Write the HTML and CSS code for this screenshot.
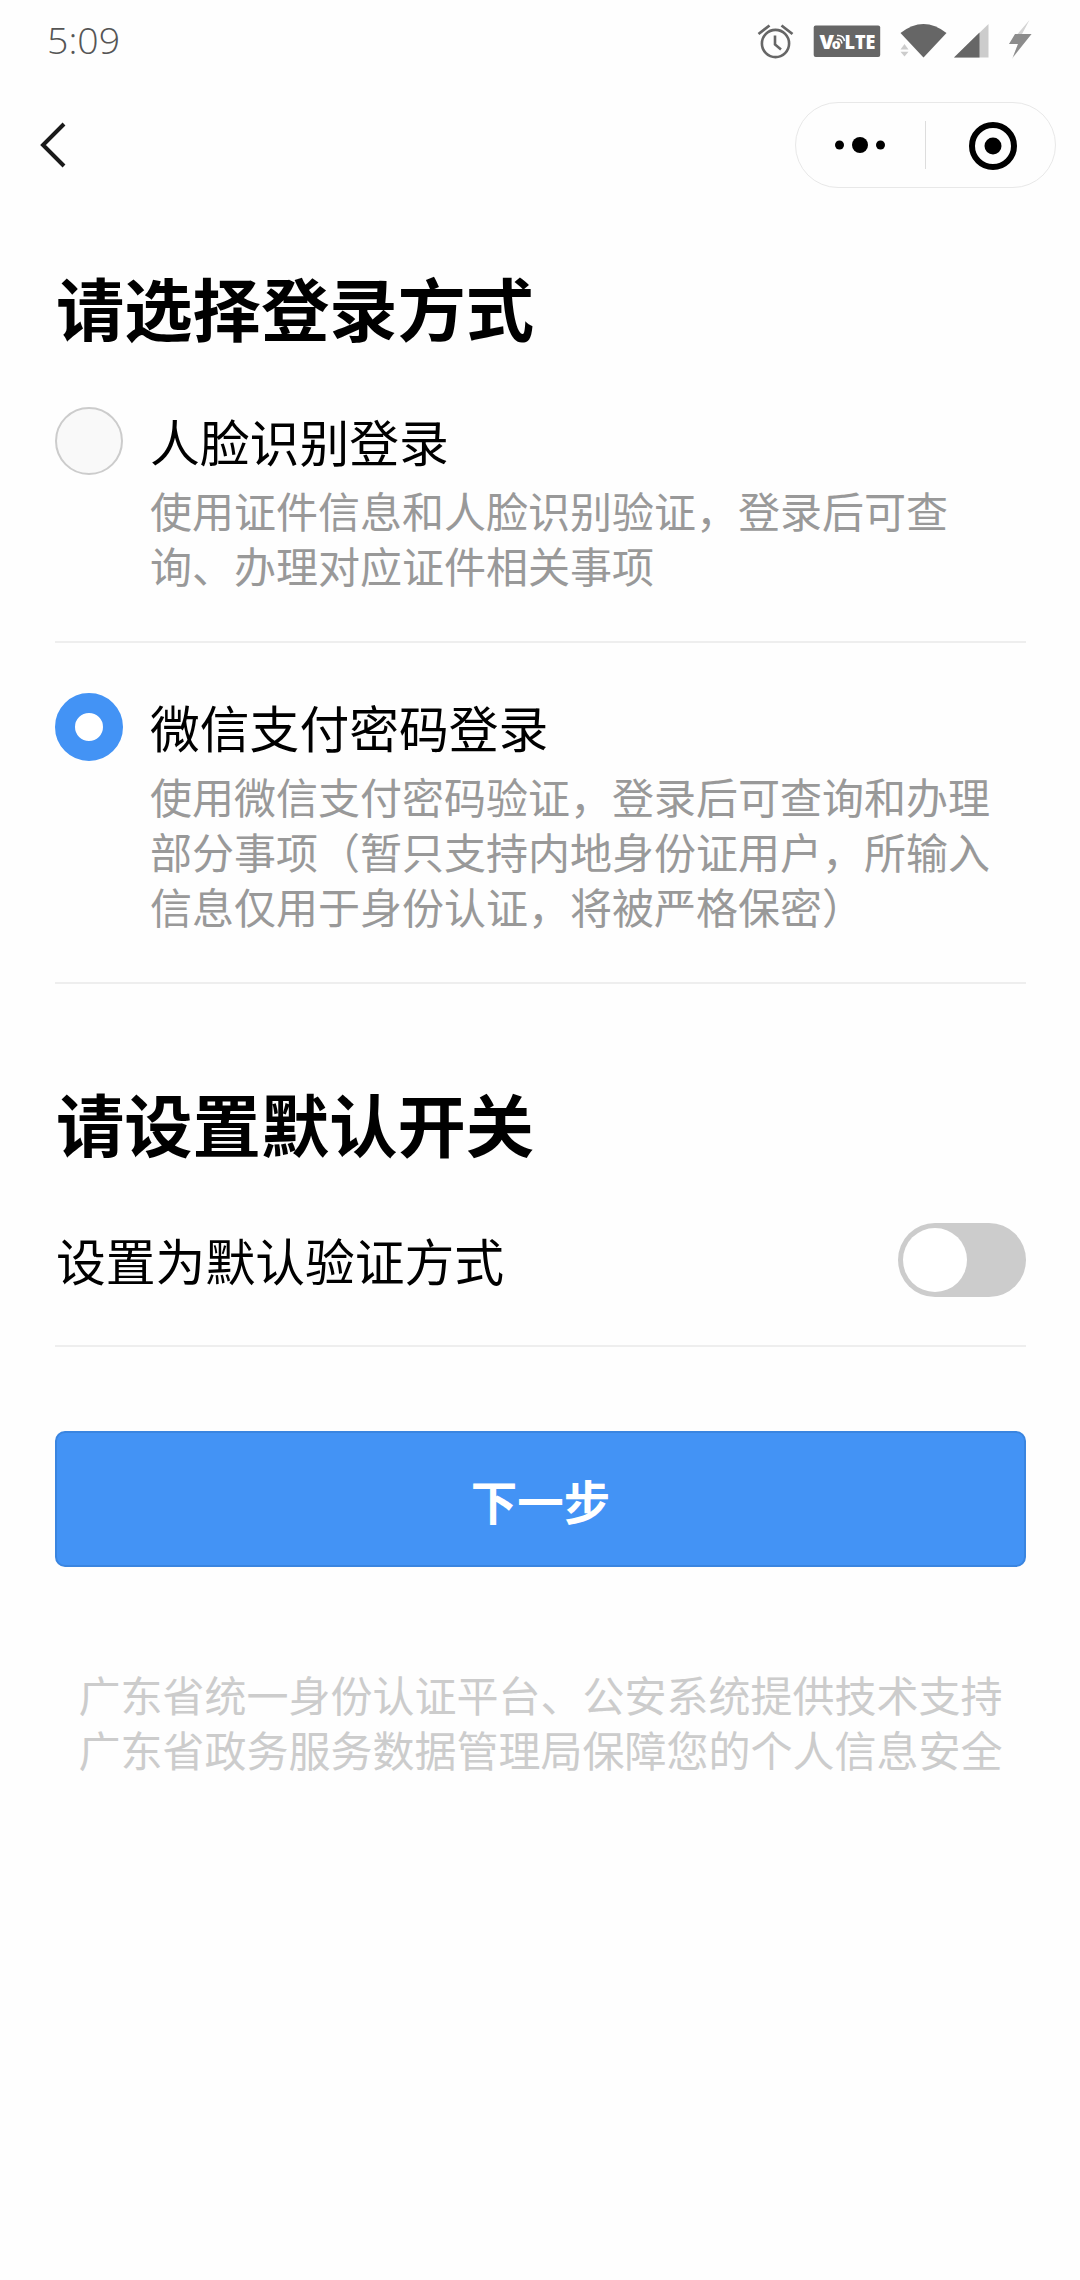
FILE: index.html
```
<!DOCTYPE html>
<html lang="zh-CN">
<head>
    <meta charset="utf-8">
    <title>登录方式</title>
    <link rel="stylesheet" href="styles.css">
</head>

<body>
    <div class="status-bar">
        <span class="time">5:09</span>
        <svg class="status-icons" width="280" height="82" viewBox="760 0 280 82">
            <!-- alarm -->
            <g fill="none" stroke="#666" stroke-width="2.6">
                <circle cx="775.5" cy="43.5" r="13.6"/>
                <path d="M775 35.500V44.500L781 49.500"/>
                <path d="M758.500 34L769.500 25.500M781.500 25.500L792.500 34" stroke-width="2.8"/>
            </g>
            <!-- volte -->
            <rect x="813.7" y="25.5" width="66.500" height="31.500" rx="2" fill="#666"/>
            <g class="volte">
                <text x="819.500" y="49" font-size="19.5" textLength="14.500" lengthAdjust="spacingAndGlyphs">V</text>
                <text x="831.800" y="49" font-size="14">o</text>
                <text x="844.500" y="49" font-size="19.5" textLength="31" lengthAdjust="spacingAndGlyphs">LTE</text>
            </g>
            <path d="M836.500 39.200Q841 38 842 43.500M837 35.600Q843.500 35 844.500 41" fill="none" stroke="#fff" stroke-width="1.6"/>
            <!-- wifi -->
            <path d="M900.500 33Q923.500 15 946.500 33L923.500 57.500Z" fill="#666"/>
            <path d="M900.500 49.500L904.500 44L908.500 49.500ZM900.500 51.700H908.500L904.500 56.500Z" fill="#ccc"/>
            <!-- signal -->
            <path d="M954 57.500L988.500 24V57.500Z" fill="#ccc"/>
            <path d="M954 57.500L979.500 32.500V57.500Z" fill="#666"/>
            <!-- charging -->
            <path d="M1029.500 20L1009 44H1018L1012 59L1031.500 34H1022Z" fill="#d4d4d4"/>
            <path d="M1015 34H1031.500L1013 57L1018 44H1009Z" fill="#8c8c8c"/>
        </svg>
    </div>

    <div class="nav-bar">
        <svg class="back" width="28" height="48" viewBox="0 0 28 48">
            <path d="M24 3L3 24L24 45" fill="none" stroke="#1a1a1a" stroke-width="4"/>
        </svg>
        <div class="capsule">
            <svg class="more" width="52" height="18" viewBox="0 0 52 18">
                <circle cx="5.500" cy="9" r="4.500"/>
                <circle cx="26" cy="9" r="8"/>
                <circle cx="46.500" cy="9" r="4.500"/>
            </svg>
            <div class="capsule-line"></div>
            <svg class="close" width="48" height="48" viewBox="0 0 48 48">
                <circle cx="24" cy="25" r="21" fill="none" stroke="#000" stroke-width="6"/>
                <circle cx="24" cy="25" r="8.500"/>
            </svg>
        </div>
    </div>

    <div class="main">
        <h1>请选择登录方式</h1>
        <div class="option">
            <div class="radio"></div>
            <div class="option-text">
                <div class="option-title">人脸识别登录</div>
                <div class="option-desc">使用证件信息和人脸识别验证，登录后可查<br>询、办理对应证件相关事项</div>
            </div>
        </div>
        <div class="option">
            <div class="radio checked"></div>
            <div class="option-text">
                <div class="option-title">微信支付密码登录</div>
                <div class="option-desc">使用微信支付密码验证，登录后可查询和办理<br>部分事项（暂只支持内地身份证用户，所输入<br>信息仅用于身份认证，将被严格保密）</div>
            </div>
        </div>

        <h1 class="second">请设置默认开关</h1>
        <div class="switch-row">
            <span class="switch-label">设置为默认验证方式</span>
            <div class="switch"></div>
        </div>

        <button class="next" type="button">下一步</button>

        <div class="footer">
            广东省统一身份认证平台、公安系统提供技术支持<br>
            广东省政务服务数据管理局保障您的个人信息安全
        </div>
    </div>
</body>
</html>
```
FILE: styles.css
```
*{
    box-sizing: border-box;
}
body{
    margin: 0;
    width: 1080px;
    min-height: 2280px;
    background-color: #fefefe;
    color: #000;
    font-family: "Noto Sans CJK SC", sans-serif;
}
svg{
    display: block;
    overflow: visible;
}

/* top bars */
.status-bar{
    display: flex;
    justify-content: space-between;
    align-items: center;
    height: 82px;
    padding: 0 40px 0 47px;
}
.time{
    font-family: "Open Sans", sans-serif;
    font-size: 37.5px;
    font-weight: 300;
    line-height: 80px;
    padding-bottom: 2px;
    color: #555;
}
.volte{
    fill: #fff;
    font-family: "Open Sans", sans-serif;
    font-weight: 800;
}
.nav-bar{
    display: flex;
    justify-content: space-between;
    align-items: center;
    height: 126px;
    padding: 0 24px 0 40px;
}
.capsule{
    display: flex;
    align-items: center;
    width: 261px;
    height: 86px;
    padding: 0 38px;
    border: 1px solid #e8e8e8;
    border-radius: 43px;
    justify-content: space-between;
}
.capsule-line{
    width: 1px;
    height: 48px;
    margin-right: 4px;
    background-color: #ddd;
}

/* content */
.main{
    padding: 49px 54px 0 55px;
}
h1{
    margin: 0;
    padding-left: 1px;
    font-size: 68.3px;
    font-weight: bold;
    line-height: 100px;
}
h1.second{
    margin-top: 89px;
}
.option{
    display: flex;
    border-bottom: 2px solid #eee;
    padding: 48px 0;
}
.radio{
    width: 68px;
    height: 68px;
    margin-top: 2px;
    flex-shrink: 0;
    border: 2px solid #ccc;
    border-radius: 50%;
    background-color: #f9f9f9;
}
.radio.checked{
    border: 20px solid #4393f5;
    background-color: #fff;
}
.option-text{
    margin-left: 27px;
    white-space: nowrap;
}
.option-title{
    font-size: 49.8px;
    line-height: 71px;
}
.option-desc{
    margin-top: 6px;
    margin-bottom: 1px;
    font-size: 42px;
    line-height: 55px;
    color: #999;
}
.switch-row{
    display: flex;
    justify-content: space-between;
    align-items: center;
    height: 174px;
    padding-top: 2px;
    border-bottom: 2px solid #eee;
    font-size: 49.8px;
}
.switch-label{
    padding: 0 0 2px 1px;
}
.switch{
    width: 128px;
    height: 74px;
    padding: 5px;
    border-radius: 37px;
    background-color: #ccc;
}
.switch::before{
    content: "";
    display: block;
    width: 64px;
    height: 64px;
    border-radius: 50%;
    background-color: #fff;
}
.next{
    display: block;
    width: 100%;
    height: 136px;
    margin-top: 84px;
    padding: 0;
    border: 2px solid #3a85e0;
    border-radius: 10px;
    background-color: #4393f5;
    color: #fff;
    font-family: inherit;
    font-size: 46.5px;
    font-weight: bold;
}
.footer{
    margin-top: 99px;
    font-size: 42px;
    line-height: 55px;
    text-align: center;
    color: #ccc;
}
```
